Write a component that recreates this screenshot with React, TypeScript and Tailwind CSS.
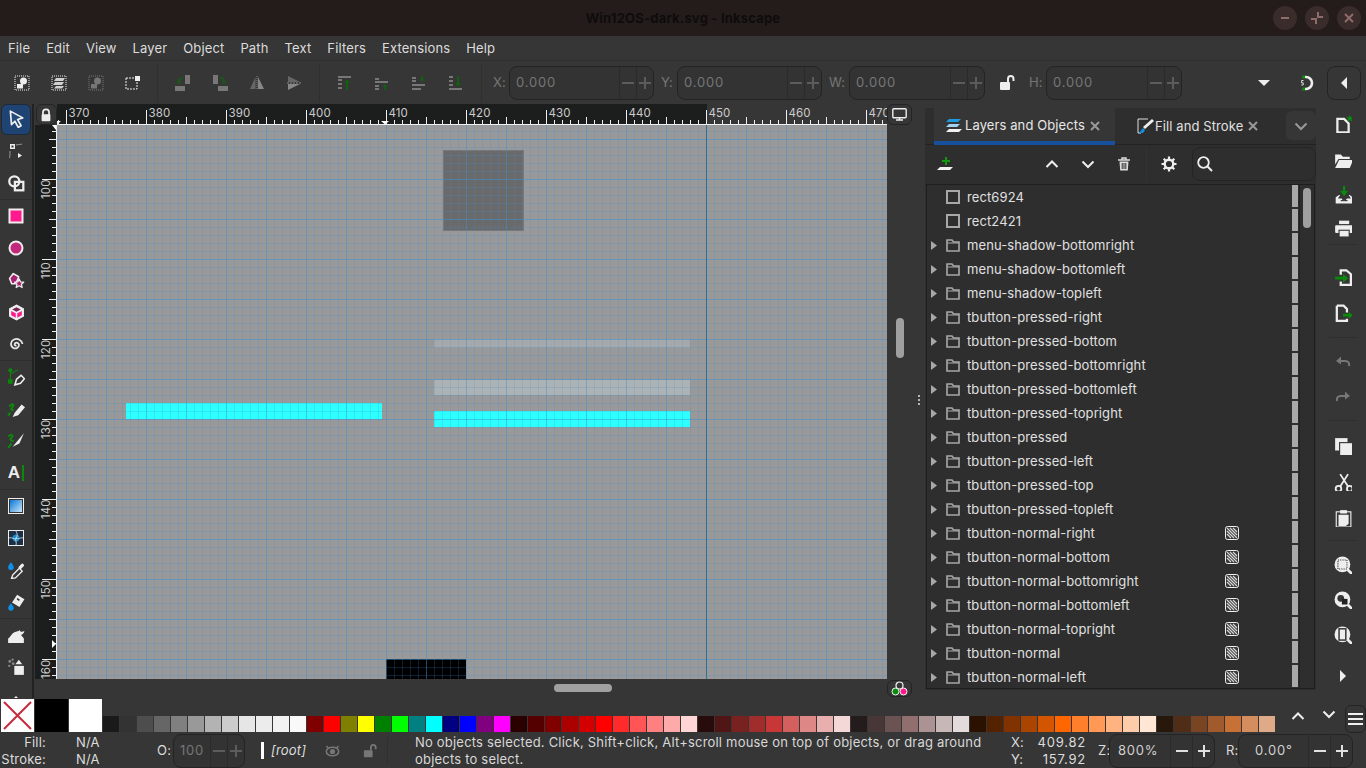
import React from "react";

const W = "#eeeeee";
const G = "#0a8a0a";
const Svg = ({ s = 16, children }: { s?: number; children: React.ReactNode }) => (
  <svg width={s} height={s} viewBox="0 0 16 16" fill="none">{children}</svg>
);

/* ---------- top toolbar icons ---------- */
const Dotted = ({ c = W, o = 1, children }: { c?: string; o?: number; children?: React.ReactNode }) => (
  <Svg><g opacity={o}><rect x="1" y="1" width="14" height="14" stroke={c} strokeWidth="1" strokeDasharray="1 1" />{children}</g></Svg>
);
const SelAll = ({ o = 1 }: { o?: number }) => (
  <Dotted o={o}><circle cx="9.5" cy="6" r="3.5" fill={W} /><rect x="3" y="9" width="6" height="4.5" fill={W} /></Dotted>
);
const SelLayers = () => (
  <Dotted><path d="M5 3h9l-2 3H3zM4 7h9l-2 3H2zM5 11h8l-2 2.5H3z" fill="#d0d0d0" /></Dotted>
);
const SelTouch = () => (
  <Svg><rect x="1" y="3" width="11" height="11" stroke={W} strokeDasharray="2 1" /><rect x="10" y="1" width="5" height="5" fill={W} /></Svg>
);
const RotL = () => (
  <Svg><rect x="10" y="0" width="5" height="9" fill="#777" /><rect x="0" y="11" width="10" height="5" fill="#777" /><path d="M8 2.5C5 2.5 4 4.5 4 7" stroke="#145e14" strokeWidth="1.6" /><path d="M1.5 6.5h5L4 9.5z" fill="#145e14" /></Svg>
);
const RotR = () => (
  <Svg><rect x="1" y="0" width="5" height="9" fill="#777" /><rect x="6" y="11" width="10" height="5" fill="#777" /><path d="M8 2.5c3 0 4 2 4 4.5" stroke="#145e14" strokeWidth="1.6" /><path d="M9.5 6.5h5L12 9.5z" fill="#145e14" /></Svg>
);
const FlipH = () => (
  <Svg><path d="M6.5 2v12H1z" fill="#666" /><path d="M9 2v12h6z" fill="#888" /><path d="M8 1v14" stroke="#888" strokeDasharray="1 1" /></Svg>
);
const FlipV = () => (
  <Svg><path d="M2 1h0l12 6H2z" fill="#666" /><path d="M2 15l12-6H2z" fill="#888" /><path d="M1 8h14" stroke="#888" strokeDasharray="2 1" /></Svg>
);
const Lines = ({ kind }: { kind: number }) => {
  const c = "#777";
  const arrow = "#145e14";
  return (
    <Svg>
      {kind === 0 && <>
        <rect x="1" y="1" width="13" height="2" fill={c} />
        <path d="M1 5h4M1 9h4M1 13h4" stroke={c} strokeWidth="2" />
        <path d="M10 15V6" stroke={arrow} strokeWidth="2" /><path d="M7 8l3-4 3 4z" fill={arrow} />
      </>}
      {kind === 1 && <>
        <path d="M1 4h4" stroke={c} strokeWidth="2" /><rect x="1" y="6" width="13" height="2" fill={c} />
        <path d="M1 11h4M1 14h4" stroke={c} strokeWidth="2" />
        <path d="M11 15v-4" stroke={arrow} strokeWidth="2" /><path d="M8.5 12l2.500-3 2.500 3z" fill={arrow} />
      </>}
      {kind === 2 && <>
        <path d="M1 3h4M1 6h4" stroke={c} strokeWidth="2" /><rect x="1" y="9" width="13" height="2" fill={c} />
        <path d="M1 14h9" stroke={c} strokeWidth="2" />
        <path d="M11 1v4" stroke={arrow} strokeWidth="2" /><path d="M8.5 4l2.500 3 2.500-3z" fill={arrow} />
      </>}
      {kind === 3 && <>
        <path d="M1 2h4M1 6h4M1 10h4" stroke={c} strokeWidth="2" /><rect x="1" y="13" width="13" height="2" fill={c} />
        <path d="M10 1v8" stroke={arrow} strokeWidth="2" /><path d="M7 8l3 4 3-4z" fill={arrow} />
      </>}
    </Svg>
  );
};
const Lock = ({ c = W, open = false, s = 16 }: { c?: string; open?: boolean; s?: number }) => (
  <Svg s={s}>
    {open ? <path d="M9 7V4c0-4 5.500-4 5.500 0v2" stroke={c} strokeWidth="2" /> : <path d="M4.500 8V5c0-4.500 7-4.500 7 0v3" stroke={c} strokeWidth="2" />}
    <rect x={open ? 1 : 3} y="7" width={open ? 10 : 10} height="8" rx="1" fill={c} />
  </Svg>
);
const Snap = () => (
  <svg width="18" height="18" viewBox="0 0 18 18" fill="none">
    <path d="M9 3h1a6 6 0 0 1 0 12H9" stroke={W} strokeWidth="2.600" />
    <rect x="6" y="1.500" width="3" height="3" fill={G} /><rect x="6" y="13.500" width="3" height="3" fill={G} />
    <path d="M7.500 6.500H5.600v2.300h1.600v2.200H5.300" stroke={W} strokeWidth="0.900" />
  </svg>
);

/* ---------- left tool icons ---------- */
const TSel = () => (
  <Svg s={18}><path d="M3 1l11 6-4.500 1.500L12.500 14l-2.500 1.500L7 10l-3 3z" fill="#234a78" stroke={W} strokeWidth="1.500" strokeLinejoin="round" /></Svg>
);
const TNode = () => (
  <Svg><rect x="2" y="1" width="5" height="5" fill={W} /><rect x="3.500" y="2.500" width="2" height="2" fill="#333" /><path d="M8 2c3-.5 5-.8 6-.8M2 8c0 3 0 5-.500 7" stroke="#999" /><path d="M10 10l4 2.500-4 2.500z" fill={W} /></Svg>
);
const TBool = () => (
  <Svg s={18}><circle cx="6.500" cy="6.500" r="4.500" stroke={W} strokeWidth="2" /><rect x="7" y="7" width="7.500" height="7.500" stroke={W} strokeWidth="2" /></Svg>
);
const TRect = () => (
  <Svg><rect x="1.500" y="1.500" width="13" height="13" fill="#ff1a8c" stroke={W} strokeWidth="2" /></Svg>
);
const TCirc = () => (
  <Svg><circle cx="8" cy="8" r="6.500" fill="#c4277c" stroke={W} strokeWidth="2" /></Svg>
);
const TStar = () => (
  <Svg s={17}><path d="M5 1.500l5 3-1 3 -2 3.500H3.500L1.500 6z" fill="#a8206e" stroke={W} strokeWidth="1.500" strokeLinejoin="round" /><path d="M10.500 6.500l1.300 2.800 3 .3-2.200 2 .7 3-2.800-1.600-2.800 1.600.7-3-2.200-2 3-.3z" fill="#a8206e" stroke={W} strokeWidth="1.200" strokeLinejoin="round" /></Svg>
);
const TCube = () => (
  <Svg s={17}><path d="M8 1l6.500 3.500v7L8 15l-6.500-3.500v-7z" fill="#f0f0f0" stroke={W} /><path d="M8 3L12 5.200 8 7.200 4 5.200z" fill="#7a1f58" /><path d="M3 6.500l4.300 2.300V13L3 10.700z" fill="#ff1a8c" /><path d="M13 6.500L8.700 8.800V13l4.300-2.300z" fill="#ff1a8c" /></Svg>
);
const TSpiral = () => (
  <Svg><path d="M8.500 9.500c-1.500.5-2.500-1-1.500-2.200 1.300-1.400 4-.5 4 1.800 0 2.800-3.500 4.200-6 2.600C2 9.800 2.500 5 6 3.500c3.500-1.500 8 .5 8.500 4.500" stroke="#e6e6e6" strokeWidth="1.800" /></Svg>
);
const TPen = () => (
  <Svg s={18}><circle cx="3" cy="2" r="1.800" fill={G} /><rect x="1" y="10" width="4" height="4" fill={G} /><path d="M3 3v7M4 5c2-2 4-3 6-3" stroke={G} strokeWidth="1" /><path d="M7 15l1.500-5 4-3.500 3 3-3.500 4z" fill="#333" stroke={W} strokeWidth="1.400" /></Svg>
);
const TPencil = () => (
  <Svg s={18}><path d="M2 6c2-3 5-3 3 0s-2 3 1 3M1 14l2-3" stroke={G} strokeWidth="1.700" /><path d="M5 15l2-4 6-7 3 2.500-6 7z" fill={W} /></Svg>
);
const TCalli = () => (
  <Svg s={18}><path d="M1 5c3-3 5-1 3 1s0 3 2 3M1 15l3-4" stroke={G} strokeWidth="1.700" /><path d="M5 14l10-12-4 9z" fill={W} /></Svg>
);
const TText = () => (
  <div className="flex items-center">
    <span className="text-[17px] font-bold leading-none text-[#eeeeee] [font-family:'Liberation_Sans',sans-serif]">A</span>
    <span className="ml-[2px] h-[16px] w-[2px] bg-[#0a8a0a]"></span>
  </div>
);
const TGrad = () => (
  <svg width="16" height="16" viewBox="0 0 16 16" fill="none">
    <defs><linearGradient id="tg" x1="0" y1="0" x2="1" y2="1"><stop offset="0" stopColor="#0a76d6" /><stop offset="1" stopColor="#c8e6fa" /></linearGradient></defs>
    <rect x="0.500" y="0.500" width="15" height="15" fill="#333" stroke={W} /><rect x="2" y="2" width="12" height="12" fill="url(#tg)" />
  </svg>
);
const TMesh = () => (
  <svg width="16" height="16" viewBox="0 0 16 16" fill="none">
    <rect x="0.500" y="0.500" width="15" height="15" fill="#1c2f44" stroke={W} />
    <circle cx="8" cy="8" r="3.500" fill="#1a9be8" opacity="0.850" />
    <path d="M1 8c4-1 5 2 7 0s1-5 0-7M8 8c2 2 5-1 7 0M8 8c-1 2 1 5 0 7" stroke="#eee" strokeWidth="0.800" />
  </svg>
);
const TDrop = () => (
  <Svg s={18}><path d="M3.500 1c1.500 2 2.500 3 2.500 4.500a2.500 2.500 0 0 1-5 0C1 4 2 3 3.500 1z" fill="#0f8fe6" /><path d="M4 15.500l1-3 6-6 2.500 2.500-6 6z" stroke={W} strokeWidth="1.200" /><path d="M10 5.500L13 2.500a1.500 1.500 0 0 1 2 2l-3 3z" fill={W} /></Svg>
);
const TFill = () => (
  <Svg s={18}><path d="M9 1.500l6.500 4-4.500 7-6.500-4z" fill={W} /><path d="M9 5l2 1.500" stroke="#333" strokeWidth="1.500" /><path d="M3.500 9c1.500 2 2.500 3 2.500 4.200a2.500 2.500 0 0 1-5 0C1 12 2 11 3.500 9z" fill="#0f8fe6" /></Svg>
);
const TErase = () => (
  <Svg s={18}><path d="M1 15v-4c2-1 3-5 7-6 2-.5 3-.8 3.500-1.500 0 2 2 2 4 1-.5 2.500-2 3-3 3.500l2.500 3V15z" fill={W} /></Svg>
);
const TSpray = () => (
  <Svg s={18}><circle cx="2.500" cy="3" r="1.300" fill="#888" /><circle cx="5" cy="1.500" r="1" fill="#888" /><circle cx="5.500" cy="5" r="1.200" fill="#888" /><circle cx="2" cy="7" r="1" fill="#888" /><path d="M10.500 1.500l3 4h-6z" fill={W} /><rect x="6.500" y="7" width="8.500" height="8" fill={W} /></Svg>
);

/* ---------- right command icons ---------- */
const New = () => (
  <Svg s={18}><path d="M3 3.500h6l4 4v8H3z" stroke={W} strokeWidth="2" /><path d="M14 0l1 2 2 .3-1.500 1.300.5 2.200L14 4.700 12 5.800l.5-2.200L11 2.300l2-.3z" fill={G} /></Svg>
);
const Open = () => (
  <Svg s={18}><path d="M1 3h5l2 2h6v2H4L1 12z" fill={W} /><path d="M4.500 8H17l-3 7H1z" fill={W} /></Svg>
);
const Save = () => (
  <Svg s={18}><path d="M1.500 10v5.500h15V10l-2.500-2h-1l2 3h-3.500l-1 1.500h-3L7 11H3.500l2-3h-1z" fill={W} /><rect x="6" y="12.500" width="6" height="1" fill="#333" /><path d="M9 0v6" stroke={G} strokeWidth="2" /><path d="M5.500 4.500h7L9 9z" fill={G} /></Svg>
);
const Print = () => (
  <Svg s={18}><rect x="4.500" y="1.500" width="9" height="3" fill={W} /><rect x="1" y="5.500" width="16" height="7" rx="1" fill={W} /><rect x="4.500" y="10" width="9" height="6" fill={W} stroke="#363636" /></Svg>
);
const Import = () => (
  <Svg s={18}><path d="M6 6V2h5l4 3.500V15H6v-3" stroke={W} strokeWidth="2" /><path d="M1 9h8" stroke={G} strokeWidth="2.500" /><path d="M8 5l4.500 4L8 13z" fill={G} /></Svg>
);
const Export = () => (
  <Svg s={18}><path d="M2.500 1.500h6l3 3v3M11.500 13v2h-9v-13.500" stroke={W} strokeWidth="2" /><path d="M8 10h6" stroke={G} strokeWidth="2.500" /><path d="M13 7l4 3-4 3z" fill={G} /></Svg>
);
const Undo = ({ flip = false }: { flip?: boolean }) => (
  <Svg><g transform={flip ? "matrix(-1 0 0 1 16 0)" : undefined}><path d="M3 7h7c3.500 0 4.500 2 4 5" stroke="#777" strokeWidth="2" /><path d="M6 2.500L1 7l5 3.500z" fill="#777" /></g></Svg>
);
const Copy = () => (
  <Svg s={18}><rect x="1" y="1" width="11" height="11" fill="#eeeeee" /><rect x="5" y="5" width="12" height="12" fill="#eeeeee" stroke="#363636" /></Svg>
);
const Cut = () => (
  <Svg s={18}><circle cx="4" cy="14" r="2.500" stroke={W} strokeWidth="1.600" /><circle cx="14" cy="14" r="2.500" stroke={W} strokeWidth="1.600" /><path d="M5.500 12L12.500 1M12.500 12L5.500 1" stroke={W} strokeWidth="1.600" /></Svg>
);
const Paste = () => (
  <Svg s={18}><rect x="2" y="2.500" width="13" height="13.500" stroke={W} /><rect x="5.500" y="1" width="6" height="3" fill={W} /><path d="M4 5h9v8l-2.500 2H4z" fill={W} /></Svg>
);
const Zoom = ({ kind }: { kind: number }) => (
  <Svg s={18}>
    <path d="M12 12l4 4" stroke={W} strokeWidth="2.400" />
    <circle cx="7.500" cy="7.500" r="7" fill="#eeeeee" />
    {kind === 0 && <rect x="3.500" y="3.500" width="8" height="8" stroke="#333" strokeDasharray="1 1" />}
    {kind === 1 && <><circle cx="6" cy="6.500" r="3" fill="#363636" /><rect x="7" y="7" width="5" height="5" fill="#222" /></>}
    {kind === 2 && <rect x="4.500" y="2.500" width="6" height="10" fill="#eee" stroke="#333" strokeWidth="1.300" />}
  </Svg>
);
const CaretR = ({ c = W }: { c?: string }) => <svg width="8" height="12" viewBox="0 0 8 12"><path d="M1 0l6 6-6 6z" fill={c} /></svg>;
const CaretL = () => <svg width="8" height="12" viewBox="0 0 8 12"><path d="M7 0L1 6l6 6z" fill={W} /></svg>;
const CaretD = () => <svg width="12" height="8" viewBox="0 0 12 8"><path d="M0 1h12L6 7z" fill={W} /></svg>;
const Chev = ({ up = false, c = W, s = 2 }: { up?: boolean; c?: string; s?: number }) => (
  <svg width="14" height="14" viewBox="0 0 14 14" fill="none"><path d={up ? "M1.500 10L7 4.500 12.500 10" : "M1.500 4.500L7 10l5.500-5.500"} stroke={c} strokeWidth={s} /></svg>
);

/* ---------- panel icons ---------- */
const LayersIcon = () => (
  <svg width="16" height="15" viewBox="0 0 16 15" fill="none"><path d="M3 1h12l-3 3H0z" fill="#1b9be0" /><path d="M3 6h11l-3 3H0z" fill="#9fd4f2" /><path d="M3 11h13l-3 3H0z" fill="#f2f2f2" /></svg>
);
const FillIcon = () => (
  <svg width="18" height="16" viewBox="0 0 18 16" fill="none"><path d="M11 1H1v14h3" stroke="#ddd" /><path d="M15 1l2 2-9 8-2-2z" fill="#eee" /><path d="M6 10l2 2-2 3H2z" fill="#1190e0" /></svg>
);
const X = () => (
  <svg width="10" height="10" viewBox="0 0 10 10" fill="none"><path d="M1 1l8 8M9 1l-8 8" stroke="#999" strokeWidth="2" /></svg>
);
const AddLayer = () => (
  <svg width="16" height="16" viewBox="0 0 16 16" fill="none"><path d="M9 1v8M5 5h8" stroke="#0f9a0f" strokeWidth="2" /><path d="M3 11h13l-3 3H0z" fill="#f2f2f2" /></svg>
);
const Trash = () => (
  <svg width="14" height="14" viewBox="0 0 14 14" fill="none"><path d="M1 3h12M5 3V1h4v2" stroke="#ddd" strokeWidth="1.400" /><path d="M2.500 4.500h9l-.7 9H3.200z" fill="#ddd" /><path d="M5.200 6v6M7 6v6M8.800 6v6" stroke="#2f2f2f" /></svg>
);
const Gear = () => (
  <svg width="16" height="16" viewBox="0 0 16 16" fill="none"><circle cx="8" cy="8" r="4.300" stroke="#eee" strokeWidth="2.400" /><path d="M8 .5v3M8 12.500v3M.5 8h3M12.500 8h3M2.700 2.700l2.100 2.100M11.200 11.200l2.100 2.100M13.300 2.700l-2.100 2.100M4.800 11.200l-2.100 2.100" stroke="#eee" strokeWidth="2.200" /></svg>
);
const Search = () => (
  <svg width="16" height="16" viewBox="0 0 16 16" fill="none"><circle cx="6.500" cy="6.500" r="5.300" stroke="#eee" strokeWidth="1.800" /><path d="M10.500 10.500L15 15" stroke="#eee" strokeWidth="2" /></svg>
);
const Square = () => (
  <svg width="14" height="14" viewBox="0 0 14 14" fill="none"><rect x="1" y="1" width="12" height="12" stroke="#a8a8a8" strokeWidth="2" /></svg>
);
const Folder = () => (
  <svg width="14" height="14" viewBox="0 0 14 14" fill="none"><path d="M1 13V2h5l1.500 2H13v9z" stroke="#a8a8a8" strokeWidth="1.600" /><path d="M1 5h12" stroke="#a8a8a8" /></svg>
);
const Hatch = () => (
  <svg width="14" height="14" viewBox="0 0 14 14" fill="none"><rect x="0.500" y="0.500" width="13" height="13" rx="2" fill="#3a3a3a" stroke="#eee" /><path d="M5 2l7 7M8 2l4 4M2 2l10 10M2 5l7 7M2 8l4 4" stroke="#d8d8d8" strokeWidth="1.100" /></svg>
);
const Eye = () => (
  <svg width="15" height="14" viewBox="0 0 15 14" fill="none"><ellipse cx="7.500" cy="7.500" rx="6.200" ry="4.300" stroke="#777" strokeWidth="1.600" /><circle cx="7.500" cy="7.500" r="2.600" fill="#777" /><path d="M1.500 2l2 2.500M13.500 2l-2 2.500" stroke="#777" strokeWidth="1.400" /></svg>
);
const Monitor = () => (
  <svg width="15" height="13" viewBox="0 0 15 13" fill="none"><rect x="0.800" y="0.800" width="13.400" height="9" rx="1" stroke="#eee" strokeWidth="1.400" /><path d="M4 12h7M7.500 10v2" stroke="#eee" strokeWidth="1.400" /></svg>
);
const Colors = () => (
  <svg width="17" height="15" viewBox="0 0 17 15" fill="none"><circle cx="8.500" cy="4.500" r="3.500" stroke="#f4f4f4" strokeWidth="1.200" /><circle cx="4.500" cy="10.500" r="3.500" fill="#0a8a0a" stroke="#f4f4f4" /><circle cx="12.500" cy="10.500" r="3.500" fill="#ff1a8c" stroke="#f4f4f4" /></svg>
);

/* ---------- small parts ---------- */
const Minus = ({ c }: { c: string }) => <svg width="12" height="12" viewBox="0 0 12 12"><rect x="0" y="5" width="12" height="2" fill={c} /></svg>;
const Plus = ({ c }: { c: string }) => <svg width="12" height="12" viewBox="0 0 12 12"><path d="M0 5h5V0h2v5h5v2H7v5H5V7H0z" fill={c} /></svg>;

const DisabledSpin = ({ value, w, cell = "w-[17px]", tx }: { value: string; w: string; cell?: string; tx?: string }) => (
  <div className={`${w} h-[34px] flex rounded-lg border border-[#242424] bg-[#333333] text-[#767676] tracking-[0.8px]`}>
    <div className={`flex-1 flex items-center ${tx ?? "pl-[6px]"}`}>{value}</div>
    <div className={`${cell} flex items-center justify-center border-l border-[#2b2b2b]`}><Minus c="#5c5c5c" /></div>
    <div className={`${cell} flex items-center justify-center border-l border-[#2b2b2b]`}><Plus c="#5c5c5c" /></div>
  </div>
);
const ActiveSpin = ({ value, w, tx }: { value: string; w: string; tx: string }) => (
  <div className={`${w} h-[34px] flex rounded-lg border border-[#242424] bg-[#333333] text-[#d0d0d0] tracking-[0.8px]`}>
    <div className={`flex-1 flex items-center ${tx}`}>{value}</div>
    <div className="w-[22px] flex items-center justify-center border-l border-[#2b2b2b]"><Minus c="#e0e0e0" /></div>
    <div className="w-[22px] flex items-center justify-center border-l border-[#2b2b2b]"><Plus c="#e0e0e0" /></div>
  </div>
);

const Slot = ({ children }: { children: React.ReactNode }) => (
  <div className="w-[37px] h-full flex items-center justify-center">{children}</div>
);
const TopSep = ({ w }: { w: string }) => (
  <div className={`${w} h-full flex items-center justify-center`}><div className="w-px h-[38px] bg-[#2f2f2f]"></div></div>
);

const Tool = ({ h, children, active }: { h: string; children: React.ReactNode; active?: boolean }) => (
  <div className={`${h} shrink-0 flex items-center justify-center`}>
    {active ? (
      <div className="w-[30px] h-[31px] rounded-md border border-[#1d2a3a] bg-[#1f4474] flex items-center justify-center">{children}</div>
    ) : children}
  </div>
);
const ToolSep = () => <div className="h-px shrink-0 bg-[#2e2e2e]"></div>;

const Cmd = ({ h, children }: { h: string; children: React.ReactNode }) => (
  <div className={`${h} shrink-0 flex items-center justify-center`}>{children}</div>
);
const CmdSep = ({ cls }: { cls: string }) => <div className={`h-px shrink-0 mx-[10px] bg-[#2e2e2e] ${cls}`}></div>;

const names: [string, boolean][] = [
  ["rect6924", false], ["rect2421", false],
  ["menu-shadow-bottomright", true], ["menu-shadow-bottomleft", true], ["menu-shadow-topleft", true],
  ["tbutton-pressed-right", true], ["tbutton-pressed-bottom", true], ["tbutton-pressed-bottomright", true],
  ["tbutton-pressed-bottomleft", true], ["tbutton-pressed-topright", true], ["tbutton-pressed", true],
  ["tbutton-pressed-left", true], ["tbutton-pressed-top", true], ["tbutton-pressed-topleft", true],
  ["tbutton-normal-right", true], ["tbutton-normal-bottom", true], ["tbutton-normal-bottomright", true],
  ["tbutton-normal-bottomleft", true], ["tbutton-normal-topright", true], ["tbutton-normal", true],
  ["tbutton-normal-left", true],
];

const swatches = [
  "#1a1a1a","#333333","#4d4d4d","#666666","#808080","#999999","#b3b3b3","#cccccc","#e6e6e6","#ececec","#f2f2f2","#f9f9f9",
  "#800000","#ff0000","#808000","#ffff00","#008000","#00ff00","#008080","#00ffff","#000080","#0000ff","#800080","#ff00ff",
  "#2b0000","#550000","#800000","#aa0000","#d40000","#ff0000","#ff2a2a","#ff5555","#ff8080","#ffaaaa","#ffd5d5",
  "#280b0b","#501616","#782121","#a02c2c","#c83737","#d35f5f","#de8787","#e9afaf","#f4d7d7",
  "#241c1c","#483737","#6c5353","#916f6f","#ac9393","#c8b7b7","#e3dbdb",
  "#2b1100","#552200","#803300","#aa4400","#d45500","#ff6600","#ff7f2a","#ff9955","#ffb380","#ffccaa","#ffe6d5",
  "#28170b","#502d16","#784421","#a05a2c","#c87137","#d38d5f","#deaa87",
];

/* rulers + canvas drawing */
const range = (a: number, b: number, s: number) => { const o: number[] = []; for (let i = a; i <= b; i += s) o.push(i); return o; };

const HRuler = () => (
  <svg width="830" height="21" viewBox="57 104 830 21" className="block shrink-0">
    <rect x="57" y="104" width="650" height="21" fill="#1c1e1e" />
    <rect x="707" y="104" width="180" height="21" fill="#363636" />
    {range(58, 887, 8).map((x) => {
      const k = x - 66;
      const y1 = k % 80 === 0 ? 110 : k % 40 === 0 ? 117 : 120;
      return <line key={x} x1={x + 0.5} x2={x + 0.5} y1={y1} y2="124" stroke="#eeeeee" />;
    })}
    {range(0, 10, 1).map((i) => (
      <text key={i} x={68.5 + 80 * i} y="117" fontSize="11.500" fill="#cccccc">{370 + 10 * i}</text>
    ))}
    <rect x="57" y="124" width="830" height="1" fill="#f0f0f0" />
    <path d="M381 121h8l-4 3.500z" fill="#ffffff" />
    <path d="M57 121l4 0-4 3.500z" fill="#ffffff" />
  </svg>
);
const VRuler = () => (
  <svg width="22" height="554" viewBox="35 125 22 554" className="block shrink-0">
    <rect x="35" y="125" width="22" height="554" fill="#1c1e1e" />
    {range(131, 679, 8).map((y) => {
      const k = y - 179;
      const m = ((k % 80) + 80) % 80;
      const x1 = m === 0 ? 42 : m === 40 ? 49 : 52;
      return <line key={y} y1={y + 0.5} y2={y + 0.5} x1={x1} x2="56" stroke="#eeeeee" />;
    })}
    {range(0, 6, 1).map((i) => (
      <text key={i} x="49.500" y={199 + 80 * i} fontSize="11.500" fill="#cccccc" transform={`rotate(-90 49.500 ${199 + 80 * i})`}>{100 + 10 * i}</text>
    ))}
    <rect x="56" y="125" width="1" height="554" fill="#f0f0f0" />
    <path d="M52 125h4v5z" fill="#ffffff" />
    <path d="M52 640v8l4-4z" fill="#ffffff" />
  </svg>
);
const Canvas = () => (
  <svg width="830" height="554" viewBox="57 125 830 554" className="block shrink-0">
    <rect x="57" y="125" width="830" height="554" fill="#999999" />
    <rect x="443.500" y="150.500" width="80" height="80" fill="#6a6a6a" stroke="#777777" />
    <rect x="434" y="339.500" width="256" height="8" fill="#a5a9ac" />
    <rect x="434" y="380" width="256" height="15" fill="#adb2b5" />
    <rect x="126" y="403" width="256" height="16" fill="#2dffff" />
    <rect x="434" y="411" width="256" height="16" fill="#2dffff" />
    <rect x="386" y="659" width="80" height="20" fill="#000000" />
    {range(58, 887, 8).map((x) => (
      <line key={x} x1={x + 0.5} x2={x + 0.5} y1="125" y2="679" stroke="#3a94d8" strokeOpacity={(x - 66) % 40 === 0 ? 0.5 : 0.21} />
    ))}
    {range(131, 679, 8).map((y) => (
      <line key={y} y1={y + 0.5} y2={y + 0.5} x1="57" x2="887" stroke="#3a94d8" strokeOpacity={(y - 139) % 40 === 0 ? 0.5 : 0.21} />
    ))}
    <line x1="706.500" x2="706.500" y1="125" y2="679" stroke="#2f7096" />
  </svg>
);

const menus = ["File", "Edit", "View", "Layer", "Object", "Path", "Text", "Filters", "Extensions", "Help"];

export default function App() {
  return (
    <div className="w-[1366px] h-[768px] overflow-hidden flex flex-col bg-[#363636] text-[13px] leading-[17px] tracking-[0.1px] text-[#dcdcdc] [font-family:Inter,'Noto_Sans',sans-serif]">
      {/* title bar */}
      <div className="relative h-[36px] shrink-0 bg-[#241c1b] flex items-center justify-center">
        <span className="font-bold text-[#0e0c0b] tracking-[0.2px]">Win12OS-dark.svg - Inkscape</span>
        <div className="absolute right-[5px] top-[6px] flex gap-[8px]">
          <div className="w-[24px] h-[24px] rounded-full bg-[#3a2c2b] flex items-center justify-center">
            <svg width="10" height="10" viewBox="0 0 10 10"><rect x="1" y="4" width="8" height="2" fill="#8d6c6a" /></svg>
          </div>
          <div className="w-[24px] h-[24px] rounded-full bg-[#3a2c2b] flex items-center justify-center">
            <svg width="12" height="12" viewBox="0 0 12 12" fill="none"><path d="M7 0v5h5M0 7h5v5" stroke="#8d6c6a" strokeWidth="2" /></svg>
          </div>
          <div className="w-[24px] h-[24px] rounded-full bg-[#3a2c2b] flex items-center justify-center">
            <svg width="10" height="10" viewBox="0 0 10 10" fill="none"><path d="M1 1l8 8M9 1l-8 8" stroke="#8d6c6a" strokeWidth="2" /></svg>
          </div>
        </div>
      </div>

      {/* menu */}
      <div className="h-[25px] shrink-0 flex items-center pl-[8px] gap-[16px] border-b border-[#2e2e2e] tracking-[0.14px]">
        {menus.map((m) => <span key={m}>{m}</span>)}
      </div>

      {/* command options toolbar */}
      <div className="h-[43px] shrink-0 flex items-center pl-[3px]">
        <Slot><SelAll /></Slot><Slot><SelLayers /></Slot><Slot><SelAll o={0.35} /></Slot><Slot><SelTouch /></Slot>
        <TopSep w="w-[13px]" />
        <Slot><RotL /></Slot><Slot><RotR /></Slot><Slot><FlipH /></Slot><Slot><FlipV /></Slot>
        <TopSep w="w-[14px]" />
        <Slot><Lines kind={0} /></Slot><Slot><Lines kind={1} /></Slot><Slot><Lines kind={2} /></Slot><Slot><Lines kind={3} /></Slot>
        <TopSep w="w-[14px]" />
        <span className="ml-[5px] w-[16px] text-[#767676]">X:</span>
        <DisabledSpin value="0.000" w="w-[145px]" />
        <span className="ml-[7px] w-[16px] text-[#767676]">Y:</span>
        <DisabledSpin value="0.000" w="w-[145px]" />
        <span className="ml-[7px] w-[20px] text-[#767676]">W:</span>
        <DisabledSpin value="0.000" w="w-[136px]" />
        <div className="w-[44px] flex justify-center"><Lock open /></div>
        <span className="w-[17px] text-[#767676]">H:</span>
        <DisabledSpin value="0.000" w="w-[136px]" />
        <div className="ml-[76px] w-[12px] flex"><CaretD /></div>
        <div className="ml-[23px] w-[24px] flex justify-center"><Snap /></div>
        <div className="ml-[10px] w-[34px] h-[34px] rounded-lg border border-[#242424] flex items-center justify-center"><CaretL /></div>
      </div>

      {/* main */}
      <div className="h-[594px] shrink-0 flex overflow-hidden">
        {/* tools */}
        <div className="w-[32px] shrink-0 flex flex-col overflow-hidden -mt-px">
          <Tool h="h-[32px]" active><TSel /></Tool>
          <Tool h="h-[32px]"><TNode /></Tool>
          <Tool h="h-[32px]"><TBool /></Tool>
          <ToolSep />
          <Tool h="h-[32px]"><TRect /></Tool>
          <Tool h="h-[32px]"><TCirc /></Tool>
          <Tool h="h-[32px]"><TStar /></Tool>
          <Tool h="h-[32px]"><TCube /></Tool>
          <Tool h="h-[32px]"><TSpiral /></Tool>
          <ToolSep />
          <Tool h="h-[32px]"><TPen /></Tool>
          <Tool h="h-[31px]"><TPencil /></Tool>
          <Tool h="h-[32px]"><TCalli /></Tool>
          <Tool h="h-[33px]"><TText /></Tool>
          <ToolSep />
          <Tool h="h-[32px]"><TGrad /></Tool>
          <Tool h="h-[32px]"><TMesh /></Tool>
          <Tool h="h-[32px]"><TDrop /></Tool>
          <Tool h="h-[32px]"><TFill /></Tool>
          <ToolSep />
          <Tool h="h-[32px]"><TErase /></Tool>
          <Tool h="h-[32px]"><TSpray /></Tool>
          <Tool h="h-[32px]"><svg width="12" height="8" viewBox="0 0 12 8"><path d="M6 1l6 6H0z" fill="#eee" /></svg></Tool>
        </div>
        <div className="w-[2px] shrink-0 bg-[#222222]"></div>

        {/* centre */}
        <div className="w-[878px] shrink-0 flex flex-col pl-px">
          <div className="h-[21px] flex">
            <div className="w-[22px] flex items-center justify-center bg-[#363636]">
              <div className="w-[21px] h-[21px] rounded-md border border-[#242424] flex items-center justify-center"><Lock s={14} /></div>
            </div>
            <HRuler />
            <div className="w-[25px] flex items-start justify-center bg-[#363636]">
              <div className="w-[25px] h-[21px] rounded-md border border-[#242424] flex items-center justify-center"><Monitor /></div>
            </div>
          </div>
          <div className="h-[554px] flex">
            <VRuler />
            <Canvas />
            <div className="w-[25px] flex flex-col items-center pt-[193px]">
              <div className="w-[8px] h-[40px] rounded-full bg-[#a0a0a0]"></div>
            </div>
          </div>
          <div className="h-[19px] flex">
            <div className="w-[852px] flex justify-start pl-[519px] pt-[5px]">
              <div className="w-[58px] h-[8px] rounded-full bg-[#a0a0a0]"></div>
            </div>
            <div className="w-[25px] h-[17px] mt-px rounded-md border border-[#242424] flex items-center justify-center"><Colors /></div>
          </div>
        </div>

        {/* handle */}
        <div className="w-[13px] shrink-0 flex flex-col items-center justify-start pt-[291px] gap-[2px]">
          <div className="w-[2px] h-[2px] rounded-full bg-[#e0e0e0]"></div>
          <div className="w-[2px] h-[2px] rounded-full bg-[#e0e0e0]"></div>
          <div className="w-[2px] h-[2px] rounded-full bg-[#e0e0e0]"></div>
        </div>

        {/* dialog */}
        <div className="w-[391px] h-[582px] mt-[4px] shrink-0 bg-[#2e2e2e] flex flex-col">
          <div className="h-[37px] shrink-0 flex border-b border-[#222222]">
            <div className="ml-[9px] w-[181px] h-[37px] bg-[#363636] border-b-[4px] border-[#17509c] flex items-center pl-[12px] pt-[2px]">
              <LayersIcon />
              <span className="ml-[3px] text-[#e6e6e6]">Layers and Objects</span>
              <span className="ml-[5px]"><X /></span>
            </div>
            <div className="w-[171px] h-[36px] flex items-center pl-[22px]">
              <FillIcon />
              <span className="text-[#e0e0e0]">Fill and Stroke</span>
              <span className="ml-[5px]"><X /></span>
            </div>
            <div className="mt-[3px] w-[30px] h-[29px] rounded-md bg-[#363636] flex items-center justify-center"><Chev c="#999" /></div>
          </div>
          <div className="h-[39px] shrink-0 flex items-center pb-px">
            <div className="w-[38px] flex justify-center pl-[1px]"><AddLayer /></div>
            <div className="ml-[71px] w-[36px] flex justify-center"><Chev up /></div>
            <div className="w-[36px] flex justify-center"><Chev /></div>
            <div className="w-[36px] flex justify-center"><Trash /></div>
            <div className="ml-[4px] w-px h-[34px] bg-[#333333]"></div>
            <div className="ml-[14px] w-[16px] flex justify-center"><Gear /></div>
            <div className="ml-[15px] w-[124px] h-[34px] rounded-lg border border-[#242424] flex items-center pl-[4px]"><Search /></div>
          </div>
          <div className="flex-1 min-h-0 mx-px mb-px border border-[#1e1e1e] flex overflow-hidden">
            <div className="flex-1 flex flex-col overflow-hidden">
              {names.map(([n, f], i) => (
                <div key={n} className="h-[24px] shrink-0 flex items-center text-[#e0e0e0]">
                  <div className="w-[11px] flex justify-end pr-[1px]">{f && <svg width="6" height="9" viewBox="0 0 6 9"><path d="M0 0l6 4.500L0 9z" fill="#a8a8a8" /></svg>}</div>
                  <div className="ml-[8px] w-[14px] flex"><span className="flex">{f ? <Folder /> : <Square />}</span></div>
                  <span className="ml-[7px] flex-1 whitespace-nowrap">{n}</span>
                  <div className="w-[14px] flex">{i >= 14 && <Hatch />}</div>
                  <div className="ml-[53px] w-[6px] h-[22px] self-start bg-[#a8a8a8]"></div>
                </div>
              ))}
            </div>
            <div className="w-[15px] ml-[1px] border-l border-[#222222] pl-[3px] pt-[3px]">
              <div className="w-[8px] h-[40px] rounded-full bg-[#a0a0a0]"></div>
            </div>
          </div>
        </div>

        {/* right commands */}
        <div className="w-[48px] shrink-0 flex flex-col ml-[3px] overflow-hidden pt-[2px]">
          <Cmd h="h-[36px]"><New /></Cmd>
          <Cmd h="h-[36px]"><Open /></Cmd>
          <Cmd h="h-[34px]"><Save /></Cmd>
          <Cmd h="h-[32px]"><Print /></Cmd>
          <CmdSep cls="mb-[14px]" />
          <Cmd h="h-[36px]"><Import /></Cmd>
          <Cmd h="h-[36px]"><Export /></Cmd>
          <CmdSep cls="mt-[6px] mb-[6px]" />
          <Cmd h="h-[36px]"><Undo /></Cmd>
          <Cmd h="h-[34px]"><Undo flip /></Cmd>
          <CmdSep cls="mt-[6px] mb-[7px]" />
          <Cmd h="h-[36px]"><Copy /></Cmd>
          <Cmd h="h-[36px]"><Cut /></Cmd>
          <Cmd h="h-[35px]"><Paste /></Cmd>
          <CmdSep cls="mt-[5px] mb-[6px]" />
          <Cmd h="h-[35px]"><Zoom kind={0} /></Cmd>
          <Cmd h="h-[35px]"><Zoom kind={1} /></Cmd>
          <Cmd h="h-[35px]"><Zoom kind={2} /></Cmd>
          <Cmd h="h-[36px] mt-[6px]"><CaretR /></Cmd>
        </div>
      </div>

      {/* palette */}
      <div className="h-[35px] shrink-0 flex pl-px pt-px">
        <div className="w-[33px] h-[33px] bg-white">
          <svg width="33" height="33" viewBox="0 0 33 33"><path d="M3 3l27 27M30 3L3 30" stroke="#c8293c" strokeWidth="2" /></svg>
        </div>
        <div className="ml-px w-[33px] h-[33px] bg-black"></div>
        <div className="ml-px w-[33px] h-[33px] bg-white"></div>
        <div className="ml-px flex mt-[17px] h-[16px]">
          {swatches.map((c, i) => (
            <div key={i} className="w-[16px] h-[16px] mr-px" style={{ backgroundColor: c }}></div>
          ))}
        </div>
        <div className="ml-[15px] w-[14px] flex items-center mt-[2px] h-[30px]"><Chev up /></div>
        <div className="ml-[17px] w-[14px] flex items-center h-[30px]"><Chev /></div>
        <div className="ml-[9px] mt-[6px] w-[21px] h-[28px] rounded-md border border-[#242424] flex flex-col items-center justify-center gap-[3px]">
          <div className="w-[15px] h-[2px] bg-[#f0f0f0]"></div>
          <div className="w-[15px] h-[2px] bg-[#f0f0f0]"></div>
          <div className="w-[15px] h-[2px] bg-[#f0f0f0]"></div>
        </div>
      </div>

      {/* status */}
      <div className="h-[35px] shrink-0 flex items-center tracking-[0.2px]">
        <div className="w-[46px] text-right">
          <div>Fill:</div>
          <div>Stroke:</div>
        </div>
        <div className="ml-[30px] w-[34px]">
          <div>N/A</div>
          <div>N/A</div>
        </div>
        <span className="ml-[47px] w-[16px]">O:</span>
        <DisabledSpin value="100" w="w-[72px]" tx="justify-center" />
        <div className="ml-[16px] w-[3px] h-[17px] bg-white"></div>
        <span className="ml-[7px] w-[40px] italic">[root]</span>
        <div className="ml-[14px] w-[15px] flex"><Eye /></div>
        <div className="ml-[23px] w-[14px] flex"><Lock c="#777" open s={14} /></div>
        <div className="ml-[10px] w-px h-[28px] bg-[#2f2f2f]"></div>
        <div className="ml-[27px] w-[585px] text-[#d8d8d8]">No objects selected. Click, Shift+click, Alt+scroll mouse on top of objects, or drag around objects to select.</div>
        <div className="ml-[11px] w-[75px]">
          <div className="flex justify-between"><span>X:</span><span className="tracking-[0.8px]">409.82</span></div>
          <div className="flex justify-between"><span>Y:</span><span className="tracking-[0.8px]">157.92</span></div>
        </div>
        <span className="ml-[12px] w-[11px]">Z:</span>
        <ActiveSpin value="800%" w="w-[106px]" tx="pl-[8px]" />
        <span className="ml-[11px] w-[12px]">R:</span>
        <ActiveSpin value="0.00°" w="w-[115px]" tx="pl-[16px]" />
      </div>
    </div>
  );
}
